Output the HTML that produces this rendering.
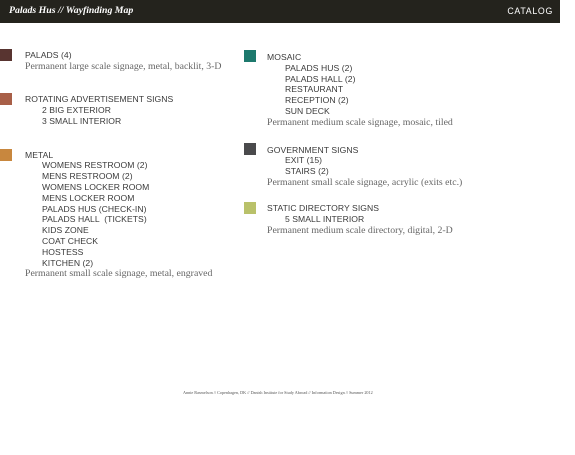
<!DOCTYPE html>
<html><head><meta charset="utf-8"><style>
*{margin:0;padding:0}
body{width:575px;height:455px;background:#fff;position:relative;overflow:hidden}
#hd{position:absolute;left:0;top:0;width:560px;height:23px;background:#24231d}
#hd .t{position:absolute;left:9px;top:5px;color:#fff;font:italic bold 9.8px "Liberation Serif",serif}
#hd .c{position:absolute;right:7px;top:6px;color:#fff;font:8.8px "Liberation Sans",sans-serif;letter-spacing:0.7px}
.s{position:absolute;width:12px;height:12px}
.l{position:absolute;font:8.6px "Liberation Sans",sans-serif;letter-spacing:0.05px;color:#3a3a3a;white-space:nowrap;line-height:10px}
.d{position:absolute;font:9.8px "Liberation Serif",serif;color:#666;white-space:nowrap;line-height:10px;margin-top:1px}
#ft{position:absolute;left:183px;top:390px;font:4.2px "Liberation Serif",serif;color:#555;white-space:nowrap}
</style></head><body>
<div id="hd"><div class="t">Palads Hus // Wayfinding Map</div><div class="c">CATALOG</div></div>

<div class="s" style="left:0;top:49px;background:#583430"></div>
<div class="l" style="left:25px;top:50px">PALADS (4)</div>
<div class="d" style="left:25px;top:61px">Permanent large scale signage, metal, backlit, 3-D</div>

<div class="s" style="left:0;top:93px;background:#a85f48"></div>
<div class="l" style="left:25px;top:94px">ROTATING ADVERTISEMENT SIGNS</div>
<div class="l" style="left:42px;top:105px">2 BIG EXTERIOR</div>
<div class="l" style="left:42px;top:116px">3 SMALL INTERIOR</div>

<div class="s" style="left:0;top:149px;background:#c8873e"></div>
<div class="l" style="left:25px;top:150px">METAL</div>
<div class="l" style="left:42px;top:160px">WOMENS RESTROOM (2)</div>
<div class="l" style="left:42px;top:171px">MENS RESTROOM (2)</div>
<div class="l" style="left:42px;top:182px">WOMENS LOCKER ROOM</div>
<div class="l" style="left:42px;top:193px">MENS LOCKER ROOM</div>
<div class="l" style="left:42px;top:204px">PALADS HUS (CHECK-IN)</div>
<div class="l" style="left:42px;top:214px">PALADS HALL &nbsp;(TICKETS)</div>
<div class="l" style="left:42px;top:225px">KIDS ZONE</div>
<div class="l" style="left:42px;top:236px">COAT CHECK</div>
<div class="l" style="left:42px;top:247px">HOSTESS</div>
<div class="l" style="left:42px;top:258px">KITCHEN (2)</div>
<div class="d" style="left:25px;top:268px">Permanent small scale signage, metal, engraved</div>

<div class="s" style="left:244px;top:50px;background:#1d796d"></div>
<div class="l" style="left:267px;top:52px">MOSAIC</div>
<div class="l" style="left:285px;top:63px">PALADS HUS (2)</div>
<div class="l" style="left:285px;top:74px">PALADS HALL (2)</div>
<div class="l" style="left:285px;top:84px">RESTAURANT</div>
<div class="l" style="left:285px;top:95px">RECEPTION (2)</div>
<div class="l" style="left:285px;top:106px">SUN DECK</div>
<div class="d" style="left:267px;top:117px">Permanent medium scale signage, mosaic, tiled</div>

<div class="s" style="left:244px;top:143px;background:#4a4a4c"></div>
<div class="l" style="left:267px;top:145px">GOVERNMENT SIGNS</div>
<div class="l" style="left:285px;top:155px">EXIT (15)</div>
<div class="l" style="left:285px;top:166px">STAIRS (2)</div>
<div class="d" style="left:267px;top:177px">Permanent small scale signage, acrylic (exits etc.)</div>

<div class="s" style="left:244px;top:202px;background:#b9c16a"></div>
<div class="l" style="left:267px;top:203px">STATIC DIRECTORY SIGNS</div>
<div class="l" style="left:285px;top:214px">5 SMALL INTERIOR</div>
<div class="d" style="left:267px;top:225px">Permanent medium scale directory, digital, 2-D</div>

<div id="ft">Annie Rasmelson // Copenhagen, DK // Danish Institute for Study Abroad // Information Design // Summer 2012</div>
</body></html>
